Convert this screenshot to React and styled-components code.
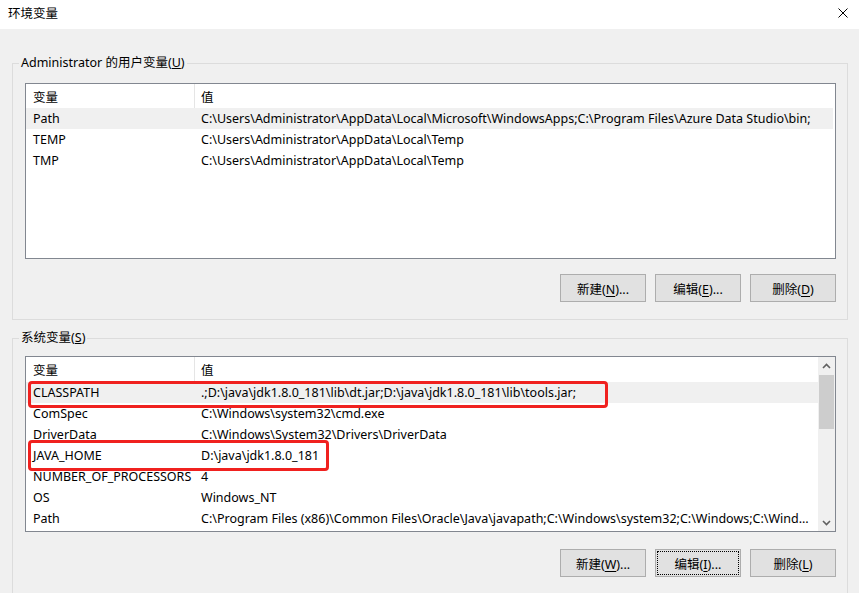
import React from 'react';
import styled, { createGlobalStyle } from 'styled-components';

const GlobalStyle = createGlobalStyle`
  html, body {
    margin: 0;
    padding: 0;
    background: #f0f0f0;
    overflow: hidden;
  }
  body {
    font-family: "Noto Sans", "Noto Sans CJK SC", sans-serif;
    font-size: 12.5px;
    color: #000;
  }
`;

const Window = styled.div`
  width: 859px;
  height: 593px;
  display: flex;
  flex-direction: column;
  overflow: hidden;
  background: #f0f0f0;
`;

const TitleBar = styled.div`
  height: 29px;
  flex-shrink: 0;
  background: #fff;
  display: flex;
  align-items: center;
  justify-content: space-between;
  padding: 0 11px 0 8px;
  box-sizing: border-box;
`;

const Title = styled.span`
  line-height: 16px;
  margin-top: -1px;
`;

const CloseButton = styled.div`
  width: 10px;
  height: 10px;
  display: flex;
  margin-top: -3px;
`;

const Body = styled.div`
  flex: 1;
  padding: 26px 11px 0 12px;
  display: flex;
  flex-direction: column;
`;

const Group = styled.fieldset`
  margin: ${({ $gap }) => $gap || 0}px 0 0;
  padding: 0;
  min-width: 0;
  border: 1px solid #dcdcdc;
  flex-shrink: 0;
`;

const Legend = styled.legend`
  margin-left: 6px;
  padding: 0 2px;
  line-height: 16px;
  height: 16px;
`;

const GroupInner = styled.div`
  padding: ${({ $top }) => $top}px 11px ${({ $bottom }) => $bottom}px 12px;
`;

const List = styled.div`
  position: relative;
  height: 176px;
  box-sizing: border-box;
  border: 1px solid #828790;
  background: #fff;
  display: flex;
`;

const ListBody = styled.div`
  flex: 1;
  min-width: 0;
  padding-right: ${({ $pad }) => $pad || 0}px;
`;

const HeaderRow = styled.div`
  display: flex;
  height: ${({ $height }) => $height}px;
  align-items: center;
`;

const HeaderCell = styled.div`
  height: 100%;
  display: flex;
  align-items: center;
  box-sizing: border-box;
  ${({ $first }) =>
    $first
      ? `width: 169px; padding-left: 7px; border-right: 1px solid #e5e5e5;`
      : `flex: 1; padding-left: 6px;`}
`;

const Row = styled.div`
  display: flex;
  height: 21px;
  align-items: center;
  background: ${({ $selected }) => ($selected ? '#f0f0f0' : 'transparent')};
`;

const NameCell = styled.div`
  width: 169px;
  flex-shrink: 0;
  padding-left: 7px;
  box-sizing: border-box;
  white-space: nowrap;
  overflow: hidden;
`;

const ValueCell = styled.div`
  flex: 1;
  min-width: 0;
  padding-left: 6px;
  padding-right: 4px;
  white-space: nowrap;
  overflow: hidden;
  text-overflow: ellipsis;
`;

const ScrollBar = styled.div`
  width: 17px;
  flex-shrink: 0;
  background: #f0f0f0;
  display: flex;
  flex-direction: column;
`;

const ScrollArrow = styled.div`
  height: 17px;
  display: flex;
  align-items: center;
  justify-content: center;
`;

const ScrollTrack = styled.div`
  flex: 1;
  padding: 1px 1px 0;
`;

const ScrollThumb = styled.div`
  height: 54px;
  background: #cdcdcd;
`;

const Mark = styled.div`
  position: absolute;
  box-sizing: border-box;
  border: 3px solid #f0211f;
  border-radius: 4px;
  pointer-events: none;
`;

const ButtonRow = styled.div`
  display: flex;
  justify-content: flex-end;
  gap: 9px;
  margin-top: ${({ $gap }) => $gap}px;
`;

const Button = styled.button`
  width: 86px;
  height: 28px;
  box-sizing: border-box;
  border: 1px solid #adadad;
  background: #e1e1e1;
  font: inherit;
  color: #000;
  padding: 0;
  outline: ${({ $focused }) => ($focused ? '1px dotted #000' : 'none')};
  outline-offset: -3px;
  u {
    text-underline-offset: 2px;
  }
`;

const userVars = [
  {
    name: 'Path',
    value:
      'C:\\Users\\Administrator\\AppData\\Local\\Microsoft\\WindowsApps;C:\\Program Files\\Azure Data Studio\\bin;',
    selected: true,
  },
  { name: 'TEMP', value: 'C:\\Users\\Administrator\\AppData\\Local\\Temp' },
  { name: 'TMP', value: 'C:\\Users\\Administrator\\AppData\\Local\\Temp' },
];

const systemVars = [
  {
    name: 'CLASSPATH',
    value: '.;D:\\java\\jdk1.8.0_181\\lib\\dt.jar;D:\\java\\jdk1.8.0_181\\lib\\tools.jar;',
    selected: true,
  },
  { name: 'ComSpec', value: 'C:\\Windows\\system32\\cmd.exe' },
  { name: 'DriverData', value: 'C:\\Windows\\System32\\Drivers\\DriverData' },
  { name: 'JAVA_HOME', value: 'D:\\java\\jdk1.8.0_181' },
  { name: 'NUMBER_OF_PROCESSORS', value: '4' },
  { name: 'OS', value: 'Windows_NT' },
  {
    name: 'Path',
    value:
      'C:\\Program Files (x86)\\Common Files\\Oracle\\Java\\javapath;C:\\Windows\\system32;C:\\Windows;C:\\Windows\\System32\\Wbem;C:\\Windows\\System32\\WindowsPowerShell\\v1.0\\',
  },
];

const Chevron = ({ up }) => (
  <svg width="9" height="6" viewBox="0 0 9 6">
    <polyline
      points={up ? '1,5 4.5,1.5 8,5' : '1,1 4.5,4.5 8,1'}
      fill="none"
      stroke="#606060"
      strokeWidth="1.6"
    />
  </svg>
);

const VarList = ({ items, scroll, headerHeight = 24, children }) => (
  <List>
    <ListBody $pad={scroll ? 0 : 2}>
      <HeaderRow $height={headerHeight}>
        <HeaderCell $first>变量</HeaderCell>
        <HeaderCell>值</HeaderCell>
      </HeaderRow>
      {items.map((item) => (
        <Row key={item.name} $selected={item.selected}>
          <NameCell>{item.name}</NameCell>
          <ValueCell>{item.value}</ValueCell>
        </Row>
      ))}
    </ListBody>
    {scroll && (
      <ScrollBar>
        <ScrollArrow>
          <Chevron up />
        </ScrollArrow>
        <ScrollTrack>
          <ScrollThumb />
        </ScrollTrack>
        <ScrollArrow>
          <Chevron />
        </ScrollArrow>
      </ScrollBar>
    )}
    {children}
  </List>
);

const Buttons = ({ keys, focusedEdit, gap }) => (
  <ButtonRow $gap={gap}>
    <Button>
      新建(<u>{keys[0]}</u>)...
    </Button>
    <Button $focused={focusedEdit}>
      编辑(<u>{keys[1]}</u>)...
    </Button>
    <Button>
      删除(<u>{keys[2]}</u>)
    </Button>
  </ButtonRow>
);

export default function App() {
  return (
    <>
      <GlobalStyle />
      <Window>
        <TitleBar>
          <Title>环境变量</Title>
          <CloseButton>
            <svg width="10" height="10" viewBox="0 0 10 10">
              <path d="M0.5 0.5 L9.5 9.5 M9.5 0.5 L0.5 9.5" stroke="#000" strokeWidth="1" />
            </svg>
          </CloseButton>
        </TitleBar>
        <Body>
          <Group>
            <Legend>
              Administrator 的用户变量(<u>U</u>)
            </Legend>
            <GroupInner $top={12} $bottom={17}>
              <VarList items={userVars} />
              <Buttons keys={['N', 'E', 'D']} gap={15} />
            </GroupInner>
          </Group>
          <Group $gap={10}>
            <Legend>
              系统变量(<u>S</u>)
            </Legend>
            <GroupInner $top={10} $bottom={30}>
              <VarList items={systemVars} scroll headerHeight={25}>
                <Mark style={{ left: 2, top: 24, width: 580, height: 27 }} />
                <Mark style={{ left: 2, top: 83, width: 301, height: 31 }} />
              </VarList>
              <Buttons keys={['W', 'I', 'L']} focusedEdit gap={17} />
            </GroupInner>
          </Group>
        </Body>
      </Window>
    </>
  );
}
